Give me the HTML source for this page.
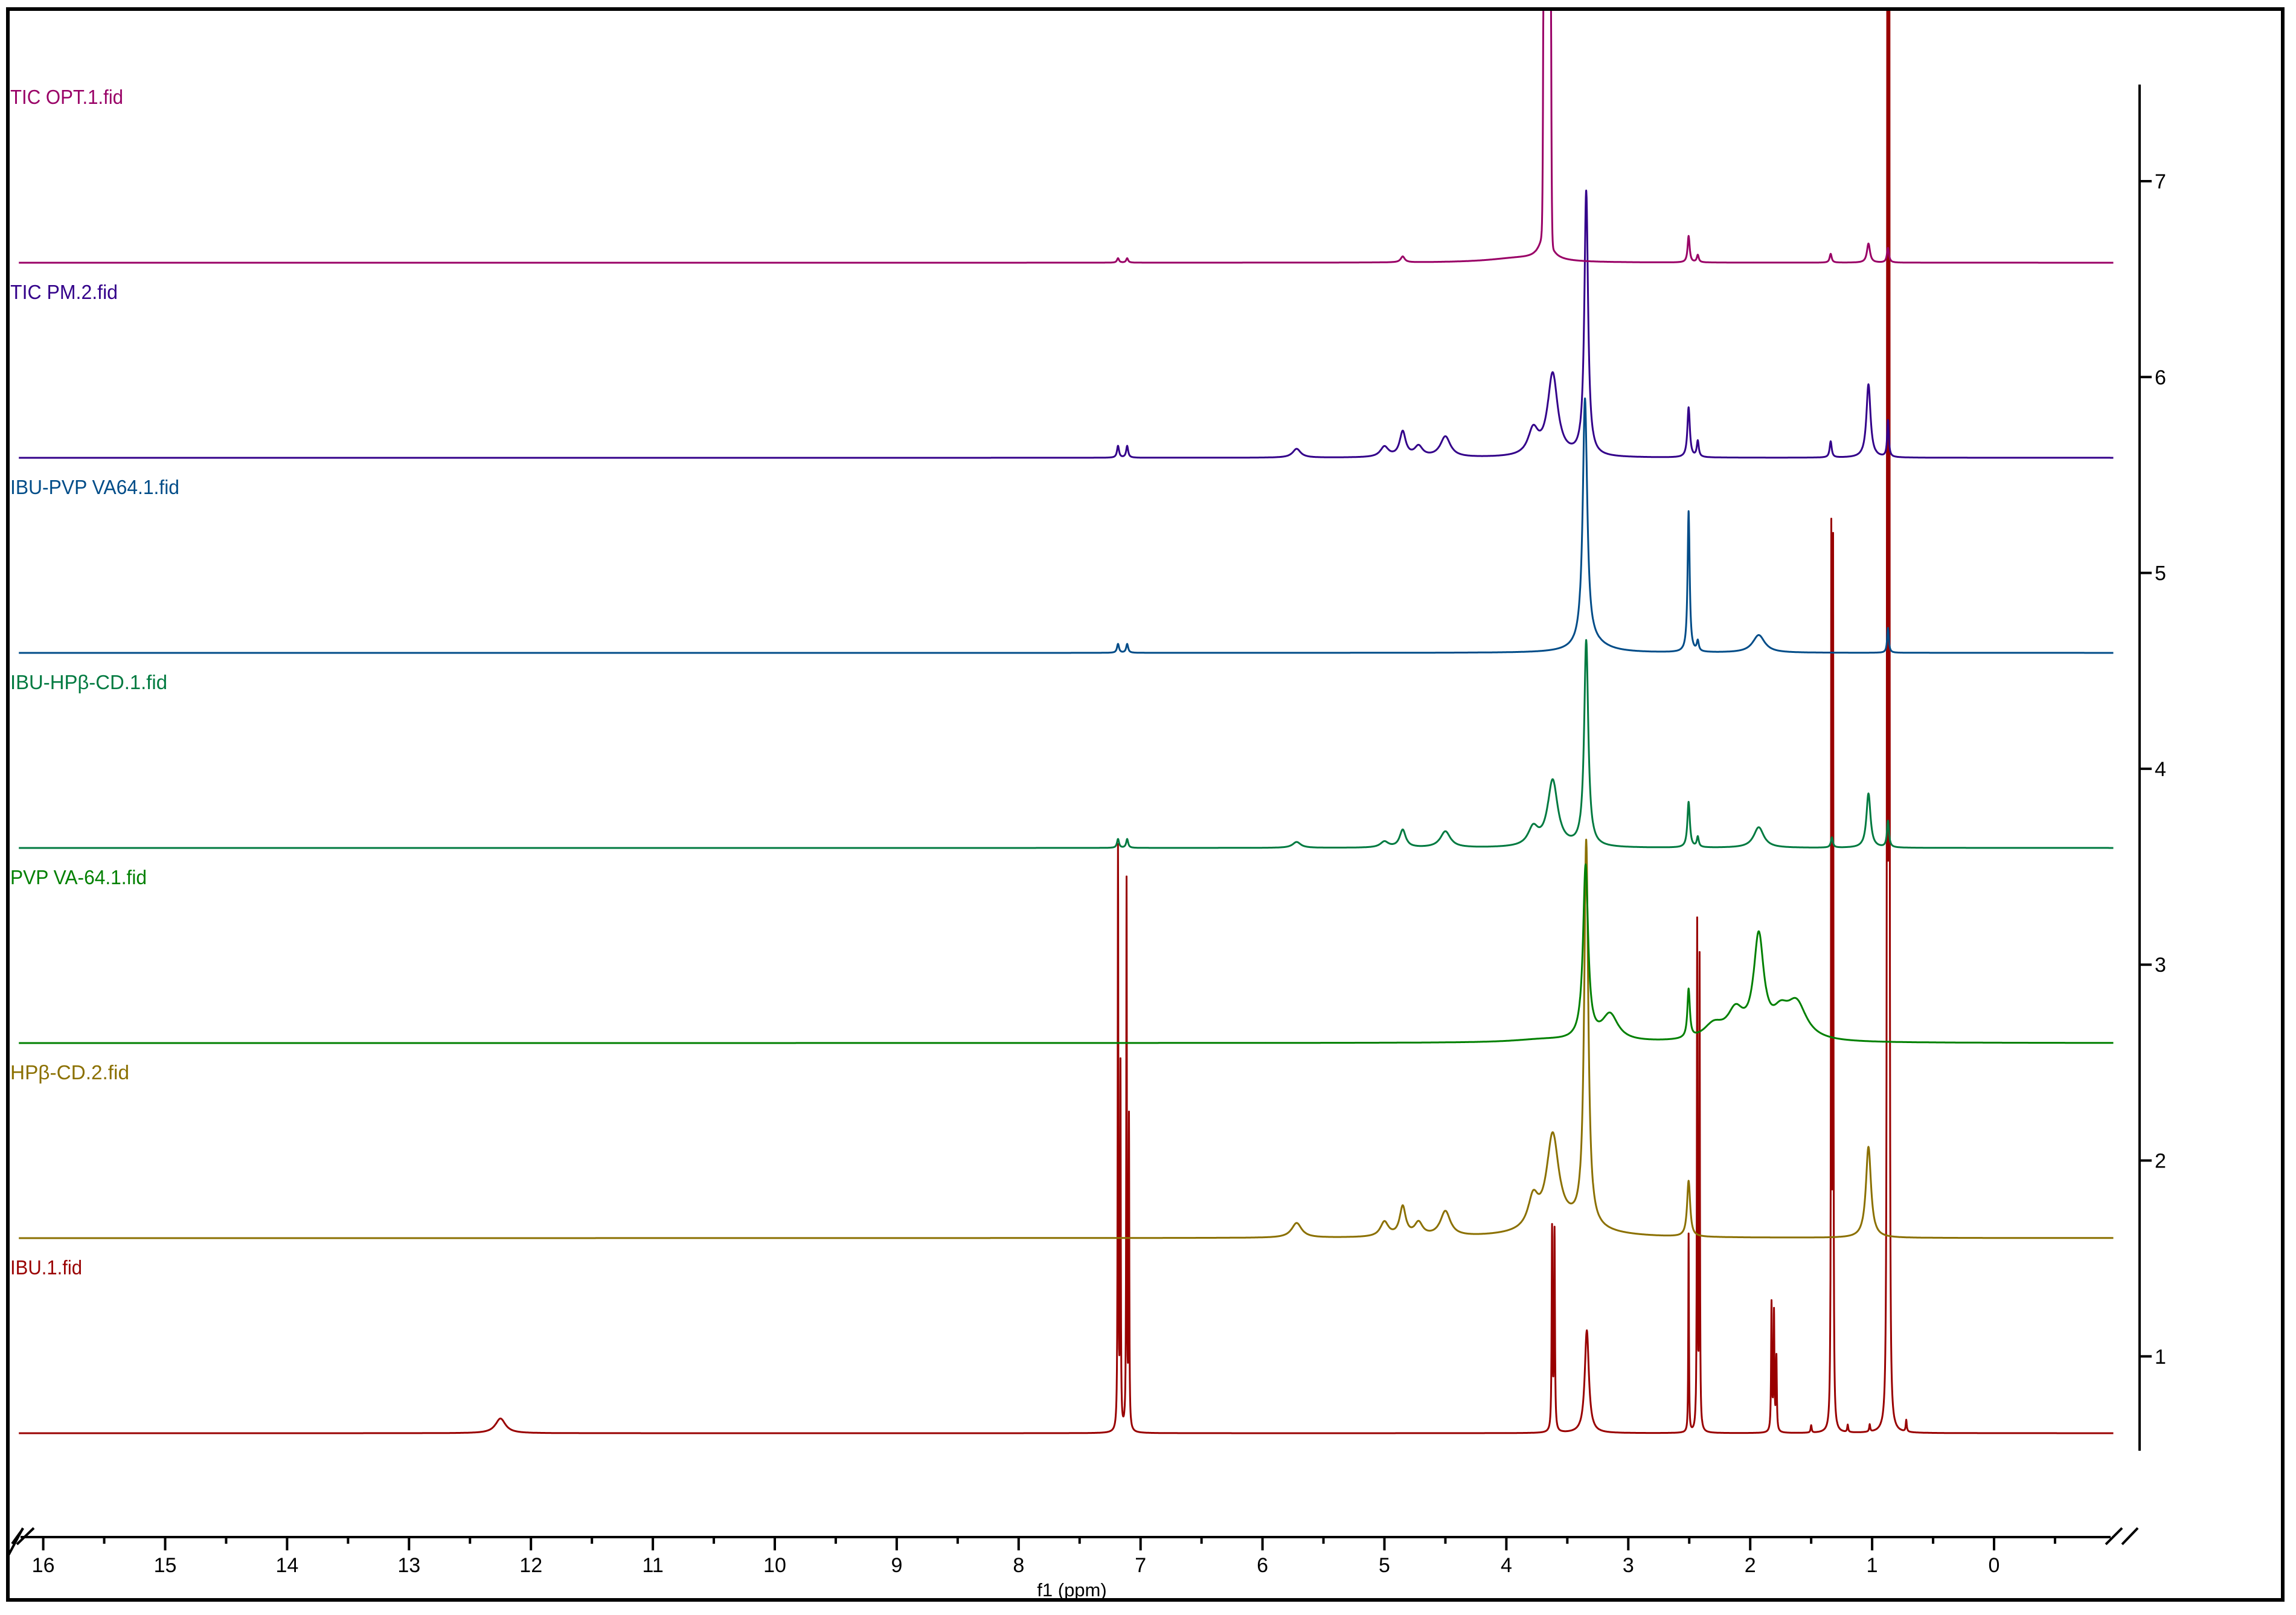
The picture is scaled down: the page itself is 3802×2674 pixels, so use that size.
<!DOCTYPE html>
<html><head><meta charset="utf-8">
<style>
html,body{margin:0;padding:0;background:#fff;}
svg{display:block;}
text{font-family:"Liberation Sans",Arial,sans-serif;}
</style></head>
<body>
<svg id="s" width="3802" height="2674" viewBox="0 0 3802 2674" xmlns="http://www.w3.org/2000/svg">
<defs><clipPath id="c"><rect x="16" y="18" width="3762" height="2628"/></clipPath></defs>
<rect x="0" y="0" width="3802" height="2674" fill="#fff"/>
<rect x="13" y="15" width="3767" height="2634" fill="none" stroke="#000" stroke-width="6"/>
<g id="traces" clip-path="url(#c)" fill="none" stroke-width="3" stroke-linejoin="round"></g>
<g stroke="#000" stroke-width="4" fill="none">
<line x1="34" y1="2545" x2="3495" y2="2545"/>
<line x1="14" y1="2575" x2="38" y2="2530"/>
<line x1="20" y1="2556" x2="38" y2="2531"/>
<line x1="28" y1="2557" x2="56" y2="2530"/>
<line x1="3487" y1="2557" x2="3514" y2="2530"/>
<line x1="3514" y1="2557" x2="3540" y2="2530"/>
</g>
<g id="xt" stroke="#000" stroke-width="4"></g>
<g id="xl" font-size="34" text-anchor="middle" fill="#000"></g>
<text x="1775" y="2643" font-size="31" text-anchor="middle" fill="#000">f1 (ppm)</text>
<line x1="3543" y1="140" x2="3543" y2="2402" stroke="#000" stroke-width="4"/>
<g id="yt" stroke="#000" stroke-width="4"></g>
<g id="yl" font-size="34" fill="#000"></g>
<g font-size="33">
<text x="17" y="172" fill="#990066" textLength="187" lengthAdjust="spacingAndGlyphs">TIC OPT.1.fid</text>
<text x="17" y="495" fill="#33008a" textLength="178" lengthAdjust="spacingAndGlyphs">TIC PM.2.fid</text>
<text x="17" y="818" fill="#004c88" textLength="280" lengthAdjust="spacingAndGlyphs">IBU-PVP VA64.1.fid</text>
<text x="17" y="1141" fill="#007a40" textLength="260" lengthAdjust="spacingAndGlyphs">IBU-HPβ-CD.1.fid</text>
<text x="17" y="1464" fill="#008000" textLength="226" lengthAdjust="spacingAndGlyphs">PVP VA-64.1.fid</text>
<text x="17" y="1787" fill="#8b7000" textLength="197" lengthAdjust="spacingAndGlyphs">HPβ-CD.2.fid</text>
<text x="17" y="2110" fill="#990000" textLength="119" lengthAdjust="spacingAndGlyphs">IBU.1.fid</text>
</g>
</svg>
<script>
(function(){
var NS="http://www.w3.org/2000/svg";
function X(p){return 3302-201.9*p;}
var xt=document.getElementById('xt'),xl=document.getElementById('xl');
for(var i=0;i<=32;i++){var p=i/2;var x=X(p);var l=document.createElementNS(NS,'line');
l.setAttribute('x1',x);l.setAttribute('x2',x);l.setAttribute('y1',2545);l.setAttribute('y2',i%2==0?2567:2556);xt.appendChild(l);
if(i%2==0){var t=document.createElementNS(NS,'text');t.setAttribute('x',x);t.setAttribute('y',2603);t.textContent=String(p);xl.appendChild(t);}}
var l0=document.createElementNS(NS,'line');l0.setAttribute('x1',X(-0.5));l0.setAttribute('x2',X(-0.5));l0.setAttribute('y1',2545);l0.setAttribute('y2',2556);xt.appendChild(l0);
var yt=document.getElementById('yt'),yl=document.getElementById('yl');
for(var v=1;v<=7;v++){var y=300+(7-v)*324.3;var l=document.createElementNS(NS,'line');
l.setAttribute('x1',3543);l.setAttribute('x2',3563);l.setAttribute('y1',y);l.setAttribute('y2',y);yt.appendChild(l);
var t=document.createElementNS(NS,'text');t.setAttribute('x',3568);t.setAttribute('y',y+12);t.textContent=String(v);yl.appendChild(t);}
var S=2.431;
var tr=[
 {c:"#990000",k:0,pk:[[12.25,10,0.05],[7.185,395,0.003],[7.165,245,0.003],[7.115,373,0.003],[7.095,210,0.003],
   [3.625,137,0.004],[3.605,135,0.004],[3.34,70,0.02],[2.505,135,0.003],[2.435,344,0.003],[2.415,320,0.003],
   [1.825,87,0.004],[1.805,80,0.004],[1.785,50,0.004],[1.335,600,0.003],[1.32,590,0.003],[0.875,1400,0.003],[0.86,1400,0.003],
   [0.72,8,0.005],[1.2,5,0.005],[1.5,5,0.005],[1.02,5,0.005]]},
 {c:"#8b7000",k:1,pk:[[5.72,10,0.05],[5.0,10,0.04],[4.85,20,0.03],[4.72,9,0.04],[4.5,17,0.05],[3.78,20,0.05],[3.62,62,0.06],
   [3.345,262,0.02],[2.505,38,0.015],[1.03,62,0.025],[3.5,8,0.3]]},
 {c:"#008000",k:2,pk:[[3.35,118,0.025],[3.15,18,0.08],[2.505,33,0.012],[2.3,10,0.1],[2.12,18,0.08],[1.93,68,0.05],[1.75,14,0.08],[1.62,24,0.1],[3.7,2,0.3]]},
 {c:"#007a40",k:3,pk:[[7.185,6,0.01],[7.11,6,0.01],[5.72,4,0.04],[5.0,4,0.04],[4.85,12,0.03],[4.5,11,0.05],[3.78,12,0.05],[3.62,45,0.05],
   [3.345,140,0.02],[2.505,31,0.012],[2.43,7,0.01],[1.93,14,0.05],[1.33,7,0.01],[1.03,37,0.02],[0.87,18,0.01]]},
 {c:"#004c88",k:4,pk:[[7.185,6,0.01],[7.11,6,0.01],[3.355,168,0.022],[3.3,6,0.15],[2.505,96,0.01],[2.43,7,0.01],[1.93,12,0.06],[0.87,17,0.008]]},
 {c:"#33008a",k:5,pk:[[7.185,8,0.01],[7.11,8,0.01],[5.72,6,0.04],[5.0,7,0.04],[4.85,17,0.03],[4.72,7,0.04],[4.5,14,0.05],[3.78,17,0.05],
   [3.62,56,0.05],[3.345,180,0.018],[2.505,34,0.012],[2.43,11,0.01],[1.34,11,0.01],[1.03,50,0.02],[0.87,25,0.008]]},
 {c:"#990066",k:6,pk:[[3.665,6000,0.012,1],[3.68,20,0.05],[3.9,3,0.3],[4.85,4,0.02],[7.185,3,0.01],[7.11,3,0.01],[2.505,18,0.01],[2.43,5,0.01],[1.34,6,0.01],[1.03,13,0.015],[0.87,10,0.01]]}
];
var g=document.getElementById('traces');
tr.forEach(function(t){
 var base=2373-t.k*323; var d=[];
 var ps=[];for(var p=16.2;p>=-0.98;p-=0.002)ps.push(p);
 t.pk.forEach(function(q){ps.push(q[0]);});
 ps.sort(function(a,b){return b-a;});
 ps.forEach(function(p){
  var s=0;for(var i=0;i<t.pk.length;i++){var q=t.pk[i],u=(p-q[0])/q[2];
   if(q[3]){s+=q[1]*Math.exp(-u*u/2);}else{s+=q[1]/(1+u*u);}}
  var y=base-s*S; if(y<0)y=0;
  d.push((d.length?'L':'M')+X(p).toFixed(1)+' '+y.toFixed(1));
 });
 var path=document.createElementNS(NS,'path');path.setAttribute('d',d.join(''));path.setAttribute('stroke',t.c);g.appendChild(path);
});
})();
</script>
</body></html>
